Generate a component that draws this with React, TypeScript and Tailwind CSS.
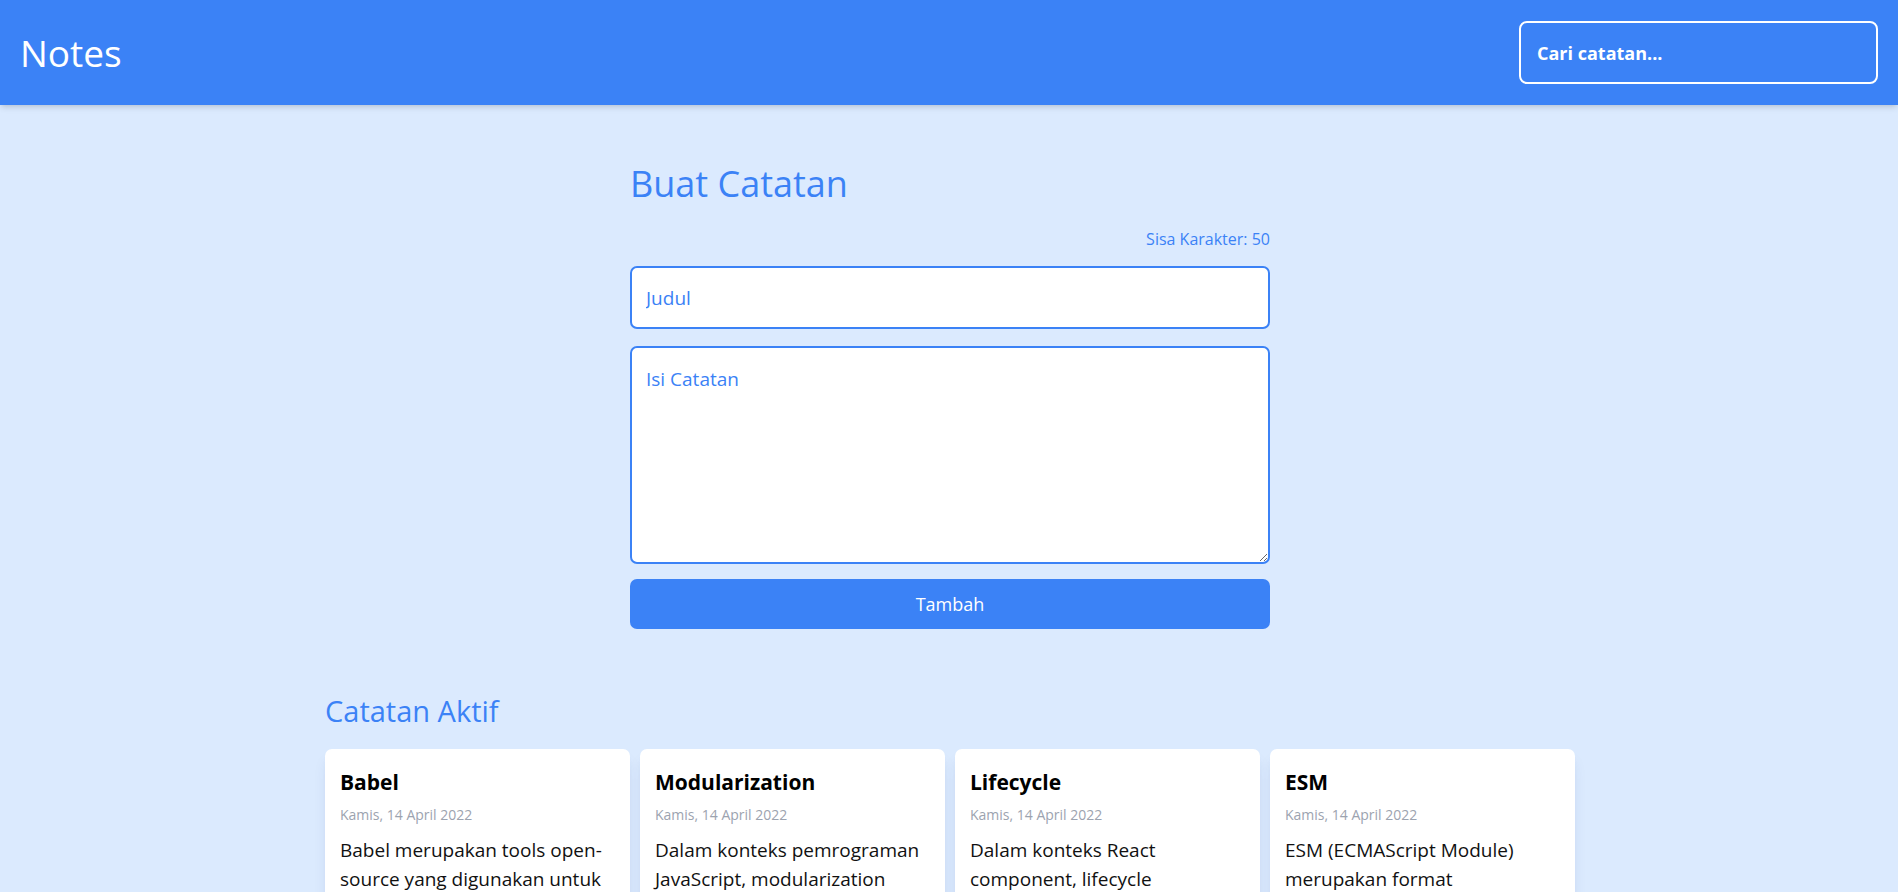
import React from "react";

type Note = { id: number; title: string; date: string; body: string };

const notes: Note[] = [
  {
    id: 1,
    title: "Babel",
    date: "Kamis, 14 April 2022",
    body: "Babel merupakan tools open-source yang digunakan untuk mengubah sintaks ECMAScript 2015+ menjadi sintaks yang didukung oleh JavaScript engine versi lama. Babel sering dipakai ketika kita menggunakan sintaks terbaru termasuk sintaks JSX.",
  },
  {
    id: 2,
    title: "Modularization",
    date: "Kamis, 14 April 2022",
    body: "Dalam konteks pemrograman JavaScript, modularization merupakan teknik dalam memecah atau menggunakan kode dalam berkas JavaScript secara terpisah berdasarkan tanggung jawabnya masing-masing.",
  },
  {
    id: 3,
    title: "Lifecycle",
    date: "Kamis, 14 April 2022",
    body: "Dalam konteks React component, lifecycle merupakan kumpulan method yang menjadi siklus hidup mulai dari component dibuat (constructor), dicetak (render), pasca-cetak (componentDidMount), dan sebagainya.",
  },
  {
    id: 4,
    title: "ESM",
    date: "Kamis, 14 April 2022",
    body: "ESM (ECMAScript Module) merupakan format modularisasi standar JavaScript.",
  },
];

export default function App() {
  return (
    <div
      className="min-h-screen bg-[#dbeafe]"
      style={{ fontFamily: '"Open Sans", "Noto Sans", sans-serif' }}
    >
      <header className="relative z-10 flex h-[105px] items-center justify-between bg-[#3b82f6] px-5 shadow-md">
        <h1 className="text-[37px] leading-none font-normal text-white">Notes</h1>
        <input
          type="text"
          placeholder="Cari catatan..."
          className="h-[63px] w-[359px] rounded-lg border-2 border-white bg-transparent pl-4 text-[18px] font-bold text-white outline-none placeholder:text-white"
        />
      </header>

      <main className="pb-10 pl-[2px]">
        <section className="mx-auto w-[640px] pt-[61px]">
          <h2 className="text-[36px] leading-[36px] font-normal text-[#3b82f6]">Buat Catatan</h2>
          <p className="mt-[25px] text-right text-[16px] leading-[24px] text-[#3b82f6]">
            Sisa Karakter: 50
          </p>
          <form className="mt-[15px] flex flex-col">
            <input
              type="text"
              placeholder="Judul"
              className="h-[63px] w-full rounded-[7px] border-2 border-[#3b82f6] bg-white px-[14px] text-[19px] text-[#3b82f6] outline-none placeholder:text-[#3b82f6]"
            />
            <textarea
              placeholder="Isi Catatan"
              className="mt-[17px] h-[218px] w-full rounded-[7px] border-2 border-[#3b82f6] bg-white px-[14px] pt-[17px] text-[19px] leading-[28.5px] text-[#3b82f6] outline-none placeholder:text-[#3b82f6]"
            />
            <button
              type="button"
              className="mt-[15px] h-[50px] w-full rounded-[7px] bg-[#3b82f6] text-[18px] text-white"
            >
              Tambah
            </button>
          </form>
        </section>

        <section className="mx-auto mt-[67px] w-[1250px]">
          <h2 className="text-[29px] leading-[29px] font-normal text-[#3b82f6]">Catatan Aktif</h2>
          <div className="mt-[24px] grid grid-cols-4 gap-[10px]">
            {notes.map((n) => (
              <article
                key={n.id}
                className="rounded-[7px] bg-white px-[15px] pt-[15px] pb-[15px] shadow-lg shadow-blue-900/10"
              >
                <h3 className="text-[21px] leading-[36px] font-bold text-black">{n.title}</h3>
                <p className="mt-[5px] text-[14px] leading-[20px] text-[#9ca3af]">{n.date}</p>
                <p className="mt-[11px] text-[19px] leading-[28.5px] text-[#111]">{n.body}</p>
              </article>
            ))}
          </div>
        </section>
      </main>
    </div>
  );
}
